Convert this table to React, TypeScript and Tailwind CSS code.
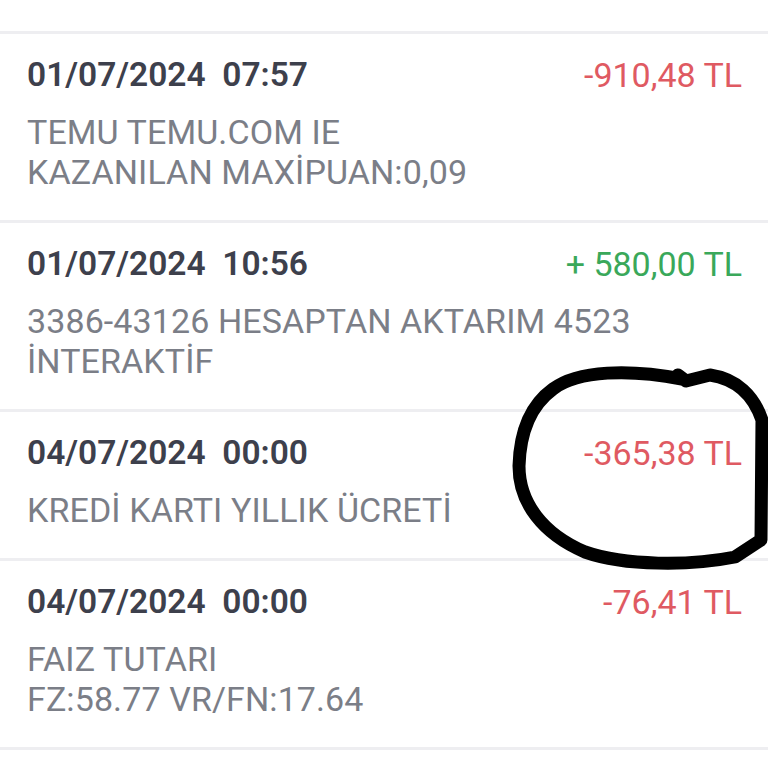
const rows = [
  {
    date: "01/07/2024  07:57",
    amount: "-910,48 TL",
    positive: false,
    lines: ["TEMU TEMU.COM IE", "KAZANILAN MAXİPUAN:0,09"],
  },
  {
    date: "01/07/2024  10:56",
    amount: "+ 580,00 TL",
    positive: true,
    lines: ["3386-43126 HESAPTAN AKTARIM 4523", "İNTERAKTİF"],
  },
  {
    date: "04/07/2024  00:00",
    amount: "-365,38 TL",
    positive: false,
    lines: ["KREDİ KARTI YILLIK ÜCRETİ"],
  },
  {
    date: "04/07/2024  00:00",
    amount: "-76,41 TL",
    positive: false,
    lines: ["FAIZ TUTARI", "FZ:58.77 VR/FN:17.64"],
  },
];

function Divider() {
  return <div className="h-[3px] bg-[#eeeef1]" />;
}

export default function App() {
  return (
    <div
      className="relative w-[768px] h-[768px] overflow-hidden bg-white"
      style={{ fontFamily: "Roboto, 'Liberation Sans', sans-serif" }}
    >
      <div className="h-[31px]" />
      <Divider />
      {rows.map((r, i) => (
        <div key={i}>
          <div className="pl-[27px] pr-[26px] pt-[21px] pb-[28px]">
            <div className="flex items-center justify-between h-[40px]">
              <span className="whitespace-pre text-[33.5px] font-semibold text-[#3d404c]">{r.date}</span>
              <span className={"text-[34px] " + (r.positive ? "text-[#3aa85a]" : "text-[#df5a62]")}>
                {r.amount}
              </span>
            </div>
            <div className="mt-[17px] text-[34px] leading-[40px] tracking-[0.1px] text-[#7b7e87]">
              {r.lines.map((l, j) => (
                <div key={j}>{l}</div>
              ))}
            </div>
          </div>
          <Divider />
        </div>
      ))}

      {/* hand-drawn circle around the yearly fee */}
      <svg className="absolute left-0 top-0 pointer-events-none" width="768" height="768" viewBox="0 0 768 768">
        <path
          d="M682 379 C630 369 578 370 553 389 C531 405 520 430 519 466 C519 503 543 534 585 552 C625 566 690 566 735 557 L761 540 L762 420 C754 396 737 379 710 375 L686 381 L678 375"
          fill="none"
          stroke="#000"
          strokeWidth="13"
          strokeLinecap="round"
          strokeLinejoin="round"
        />
      </svg>
    </div>
  );
}
